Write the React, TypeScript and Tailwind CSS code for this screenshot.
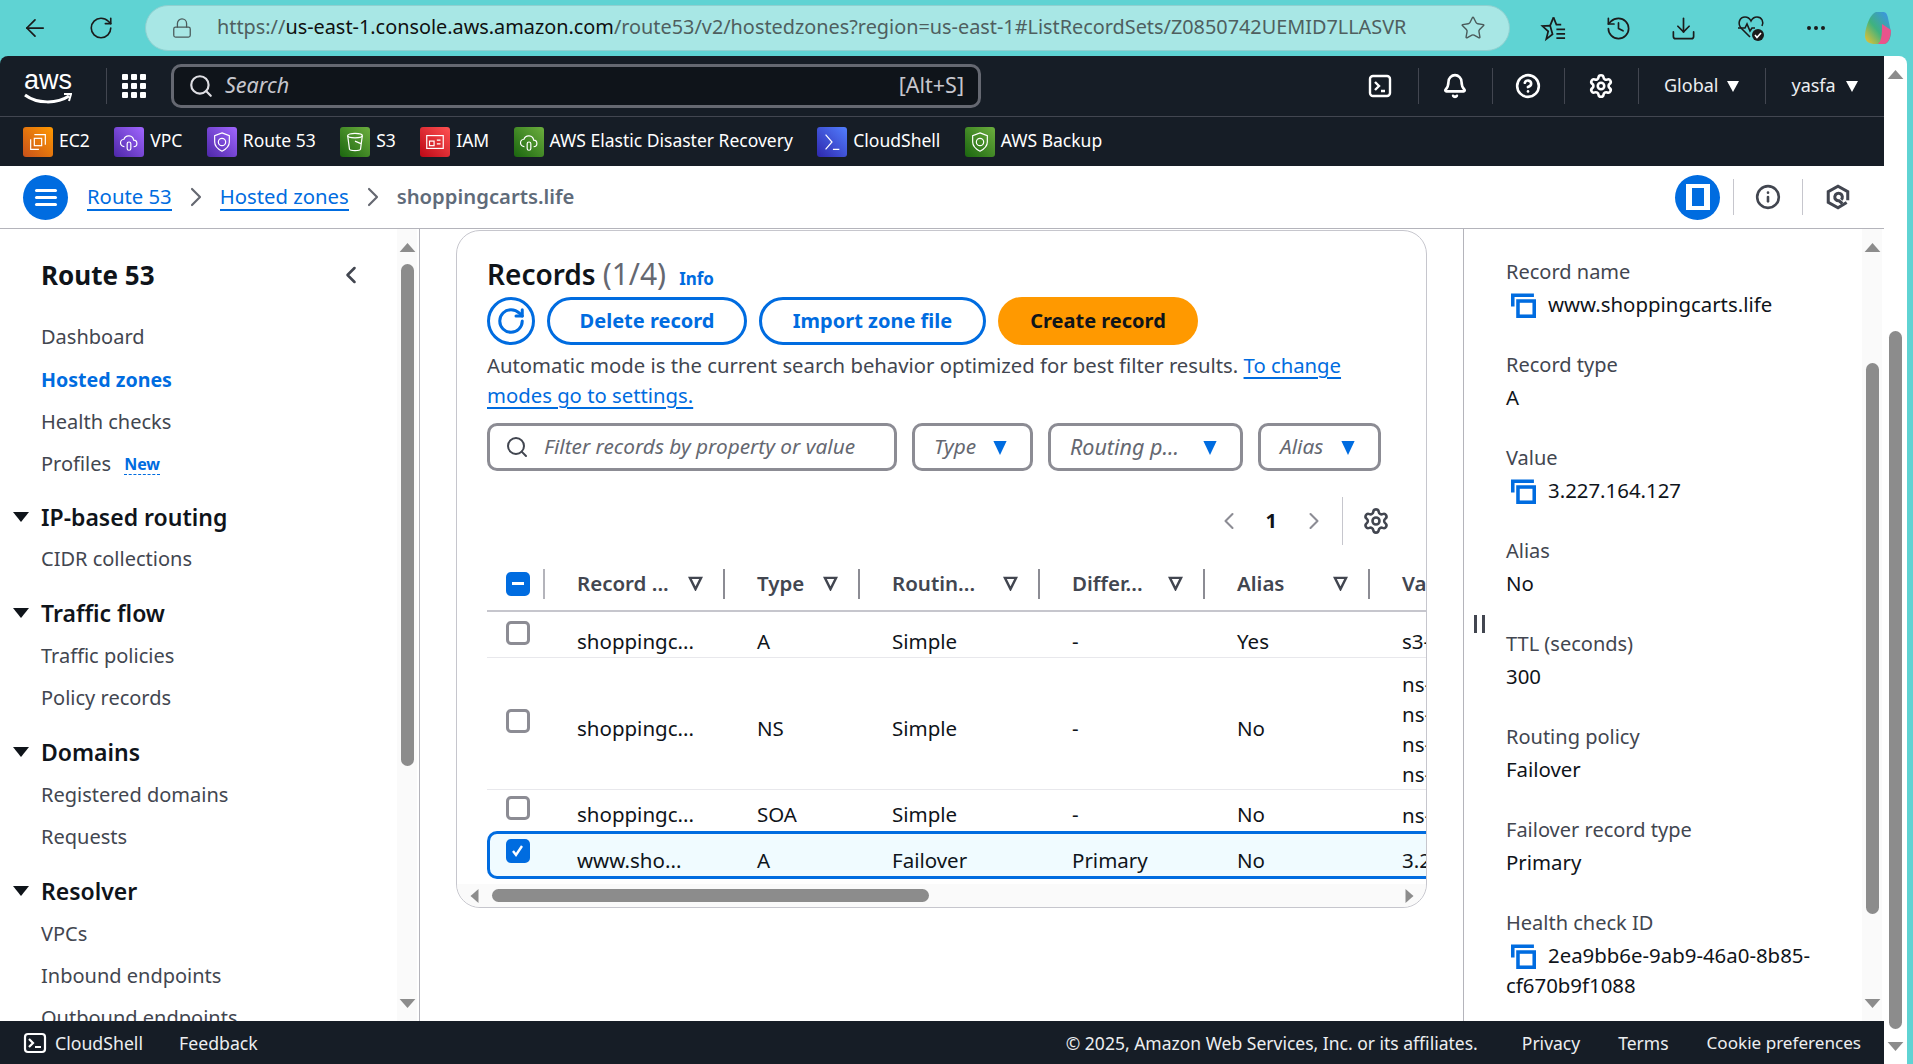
import {
  ArrowLeft,
  Bell,
  ChevronLeft,
  ChevronRight,
  CircleHelp,
  Download,
  Ellipsis,
  History,
  Info,
  Lock,
  RotateCw,
  Search,
  Settings,
  Star,
} from "lucide-react";

const services = [
  { name: "EC2", bg: "bg-[linear-gradient(45deg,#c8511b,#ff9900)]", glyph: "chip" },
  { name: "VPC", bg: "bg-[linear-gradient(45deg,#4d27a8,#a166ff)]", glyph: "cloud" },
  { name: "Route 53", bg: "bg-[linear-gradient(45deg,#4d27a8,#a166ff)]", glyph: "shield" },
  { name: "S3", bg: "bg-[linear-gradient(45deg,#1b660f,#6cae3e)]", glyph: "bucket" },
  { name: "IAM", bg: "bg-[linear-gradient(45deg,#bd0816,#ff5252)]", glyph: "id" },
  { name: "AWS Elastic Disaster Recovery", bg: "bg-[linear-gradient(45deg,#1b660f,#6cae3e)]", glyph: "cloud" },
  { name: "CloudShell", bg: "bg-[linear-gradient(45deg,#2e27ad,#527fff)]", glyph: "term" },
  { name: "AWS Backup", bg: "bg-[linear-gradient(45deg,#1b660f,#6cae3e)]", glyph: "shield" },
];

const sideNav = [
  { items: ["Dashboard", "Hosted zones", "Health checks", "Profiles"] },
  { title: "IP-based routing", items: ["CIDR collections"] },
  { title: "Traffic flow", items: ["Traffic policies", "Policy records"] },
  { title: "Domains", items: ["Registered domains", "Requests"] },
  { title: "Resolver", items: ["VPCs", "Inbound endpoints", "Outbound endpoints"] },
];

const details = [
  { label: "Record name", value: "www.shoppingcarts.life", copy: true },
  { label: "Record type", value: "A" },
  { label: "Value", value: "3.227.164.127", copy: true },
  { label: "Alias", value: "No" },
  { label: "TTL (seconds)", value: "300" },
  { label: "Routing policy", value: "Failover" },
  { label: "Failover record type", value: "Primary" },
  { label: "Health check ID", value: "2ea9bb6e-9ab9-46a0-8b85-cf670b9f1088", copy: true },
];

const rows = [
  { name: "shoppingc...", type: "A", routing: "Simple", diff: "-", alias: "Yes", value: ["s3-"], cls: "h-[45px]", boxCls: "mt-[-2px]", pad: "pt-[14px]" },
  { name: "shoppingc...", type: "NS", routing: "Simple", diff: "-", alias: "No", value: ["ns-", "ns-", "ns-", "ns-"], cls: "h-[131px]", boxCls: "mt-[-4px]", pad: "pt-[11px]" },
  { name: "shoppingc...", type: "SOA", routing: "Simple", diff: "-", alias: "No", value: ["ns-"], cls: "h-[41px]", boxCls: "mt-[-4px]", pad: "pt-[9px]" },
];

const ServiceGlyph = ({ kind }: { kind: string }) => (
  <svg viewBox="0 0 24 24" className="w-[22px] h-[22px]" fill="none" stroke="white" strokeWidth="1.3">
    {kind === "chip" && (
      <>
        <path d="M4 9v11h9M8 4h12v11" />
        <rect x="8" y="8" width="8" height="8" />
      </>
    )}
    {kind === "cloud" && (
      <>
        <path d="M7 17a4 4 0 0 1-.5-8 5.5 5.5 0 0 1 10.6 1 3.5 3.5 0 0 1 0 7" />
        <rect x="10" y="12" width="4" height="9" rx="2" />
      </>
    )}
    {kind === "shield" && (
      <>
        <path d="M12 2l8 3v7c0 5-4 8-8 10-4-2-8-5-8-10V5z" />
        <circle cx="12" cy="12" r="4" />
      </>
    )}
    {kind === "bucket" && (
      <>
        <ellipse cx="12" cy="5" rx="8" ry="2.5" />
        <path d="M4 5l2 15c1 2 11 2 12 0l2-15M12 11l7 3" />
      </>
    )}
    {kind === "id" && (
      <>
        <rect x="3" y="5" width="18" height="14" />
        <rect x="6" y="11" width="5" height="5" />
        <path d="M14 10h4M14 14h4" />
      </>
    )}
    {kind === "term" && <path d="M5 4l7 8-7 8M13 20h7" />}
  </svg>
);

const Caret = () => (
  <svg viewBox="0 0 14 18" className="w-[14px] h-[17px] shrink-0">
    <path d="M0 2h14L7 17z" fill="#006ce0" />
  </svg>
);

const SortIcon = () => (
  <svg viewBox="0 0 16 16" className="w-[15px] h-[15px] shrink-0" fill="none" stroke="#424650" strokeWidth="2.6">
    <path d="M2 2h12L8 14z" />
  </svg>
);

const CopyIcon = () => (
  <svg viewBox="0 0 24 24" className="w-[25px] h-[25px] shrink-0" fill="none" stroke="#006ce0" strokeWidth="3.4">
    <path d="M1.7 13V2.2H22" />
    <rect x="6.7" y="7.7" width="15.6" height="14.6" />
  </svg>
);

// scrollbar columns, the thumb position is set with top margin
const ScrollCol = ({ thumbTop, thumbH, cls }: { thumbTop: string; thumbH: string; cls: string }) => (
  <div className={`flex flex-col items-center justify-between bg-[#fafafa] ${cls}`}>
    <div className="flex flex-col items-center">
      <svg viewBox="0 0 14 8" className="w-[17px] h-[9px] mt-[14px]">
        <path d="M0 8L7 0l7 8z" fill="#8c8c8c" />
      </svg>
      <div className={`w-[13px] rounded-full bg-[#8c8c8c] ${thumbTop} ${thumbH}`} />
    </div>
    <svg viewBox="0 0 14 8" className="w-[17px] h-[9px] mb-[13px]">
      <path d="M0 0l7 8 7-8z" fill="#8c8c8c" />
    </svg>
  </div>
);

const BrowserBar = () => (
  <div className="h-[56px] flex items-center shrink-0 text-[#1b1b1b]">
    <ArrowLeft className="w-[28px] h-[28px] ml-[21px]" strokeWidth={1.5} />
    <RotateCw className="w-[26px] h-[26px] ml-[39px]" strokeWidth={1.5} />
    <div className="w-[1365px] h-[46px] ml-[31px] rounded-full bg-[#a8e7e5] border border-[#8fd0d0] flex items-center">
      <Lock className="w-[22px] h-[22px] ml-[25px] text-[#4b5b5b]" strokeWidth={1.4} />
      <div className="ml-[24px] mb-[2px] text-[19.85px] text-[#4f5f5f] whitespace-nowrap">
        https://<span className="text-[#101010]">us-east-1.console.aws.amazon.com</span>/route53/v2/hostedzones?region=us-east-1#ListRecordSets/Z0850742UEMID7LLASVR
      </div>
      <Star className="w-[26px] h-[26px] ml-auto mr-[23px] text-[#4b5b5b]" strokeWidth={1.3} />
    </div>
    <svg viewBox="0 0 28 28" className="w-[27px] h-[27px] ml-[30px]" fill="none" stroke="#1b1b1b" strokeWidth="1.8">
      <path d="M14 2.5l3 7.5h5M13 20l-6.5 5 2-8L2.500 11.500l8-.5z" />
      <path d="M14 2.500l-3.500 8.500" />
      <path d="M17 15h9M17 19.500h9M17 24h9" />
    </svg>
    <History className="w-[27px] h-[27px] ml-[38px]" strokeWidth={1.5} />
    <Download className="w-[27px] h-[27px] ml-[38px]" strokeWidth={1.5} />
    <svg viewBox="0 0 28 28" className="w-[28px] h-[28px] ml-[40px]" fill="none" stroke="#1b1b1b" strokeWidth="1.6">
      <path d="M13 23L4 14C0 9 3 3 8 3c3 0 5 2 6 4 1-2 3-4 6-4 5 0 7 5 5 9" />
      <path d="M1 14h7l2-4 3 7 2-3h3" />
      <circle cx="21" cy="21" r="6" fill="#1b1b1b" stroke="none" />
      <path d="M18 21l2 2.500 4-4.500" stroke="white" />
    </svg>
    <Ellipsis className="w-[24px] h-[24px] ml-[39px]" />
    <svg viewBox="0 0 28 36" className="w-[28px] h-[36px] ml-[36px]">
      <defs>
        <linearGradient id="cp" x1="0" y1="1" x2="1" y2="0">
          <stop offset="0" stopColor="#f6c32c" />
          <stop offset="0.45" stopColor="#3fb27f" />
          <stop offset="1" stopColor="#3a8ff5" />
        </linearGradient>
      </defs>
      <path d="M12 2h7c3 0 4 2 5 6l3 14c0 6-3 12-7 12h-9C6 34 1 32 1 26 1 18 6 4 12 2z" fill="url(#cp)" />
      <path d="M18 14l9 6c0 7-3 14-7 14h-6c4-3 4-12 4-20z" fill="#e9548c" />
    </svg>
  </div>
);

const TopNav = () => (
  <div className="h-[61px] bg-[#161d26] flex items-center shrink-0 border-b border-[#424650] text-white">
    <div className="w-[48px] ml-[24px] flex flex-col h-[38px]">
      <div className="text-[27px] leading-[26px] font-['Liberation_Sans',sans-serif] text-center">aws</div>
      <svg viewBox="0 0 48 12" className="w-[48px] h-[12px]">
        <path d="M1 2c12 9 32 9 44 1" fill="none" stroke="white" strokeWidth="3" />
        <path d="M40 1l7 0-2 7" fill="none" stroke="white" strokeWidth="2" />
      </svg>
    </div>
    <div className="h-[36px] w-px bg-[#424650] ml-[34px]" />
    <div className="grid grid-cols-3 gap-[3px] ml-[15px]">
      {Array.from({ length: 9 }).map((_, i) => (
        <div key={i} className="w-[6px] h-[6px] rounded-[1px] bg-white" />
      ))}
    </div>
    <div className="w-[810px] h-[44px] ml-[25px] rounded-[10px] border-[3px] border-[#656871] bg-[#0f141a] flex items-center px-[14px] text-[#c6c6cd]">
      <Search className="w-[26px] h-[26px] text-[#dedee3]" strokeWidth={2} />
      <span className="ml-[11px] mb-[2px] italic text-[21.500px]">Search</span>
      <span className="ml-auto mb-[2px] text-[21.500px]">[Alt+S]</span>
    </div>
    <svg viewBox="0 0 24 24" className="w-[24px] h-[24px] ml-[387px]" fill="none" stroke="white" strokeWidth="2.4">
      <rect x="2" y="2" width="20" height="20" rx="3" />
      <path d="M7 8l4 4-4 4M13 17h4" />
    </svg>
    <div className="h-[36px] w-px bg-[#424650] ml-[26px]" />
    <Bell className="w-[26px] h-[26px] ml-[23px]" strokeWidth={2.4} />
    <div className="h-[36px] w-px bg-[#424650] ml-[24px]" />
    <CircleHelp className="w-[26px] h-[26px] ml-[22px]" strokeWidth={2.4} />
    <div className="h-[36px] w-px bg-[#424650] ml-[23px]" />
    <Settings className="w-[26px] h-[26px] ml-[23px]" strokeWidth={2.4} />
    <div className="h-[36px] w-px bg-[#424650] ml-[24px]" />
    <span className="ml-[25px] mb-[2px] text-[18px] text-[#eceef0]">Global</span>
    <div className="ml-[9px] w-0 h-0 border-x-[6px] border-x-transparent border-t-[11px] border-t-white" />
    <div className="h-[36px] w-px bg-[#424650] ml-[26px]" />
    <span className="ml-[25px] mb-[2px] text-[18px] text-[#eceef0]">yasfa</span>
    <div className="ml-[10px] w-0 h-0 border-x-[6px] border-x-transparent border-t-[11px] border-t-white" />
  </div>
);

const ServicesBar = () => (
  <div className="h-[49px] bg-[#161d26] flex items-center shrink-0 pl-[23px] gap-[24.400px] text-white text-[17.500px] whitespace-nowrap">
    {services.map((s) => (
      <div key={s.name} className="flex items-center gap-[6px]">
        <div className={`w-[30px] h-[30px] rounded-[3px] flex items-center justify-center ${s.bg}`}>
          <ServiceGlyph kind={s.glyph} />
        </div>
        <span className="mb-[2px]">{s.name}</span>
      </div>
    ))}
  </div>
);

const Breadcrumb = () => (
  <div className="h-[63px] flex items-center shrink-0 bg-white border-b border-[#b4b4bb] text-[20.300px]">
    <div className="w-[45px] h-[45px] ml-[23px] rounded-full bg-[#006ce0] flex flex-col items-center justify-center gap-[4px]">
      <div className="w-[22px] h-[3px] bg-white rounded" />
      <div className="w-[22px] h-[3px] bg-white rounded" />
      <div className="w-[22px] h-[3px] bg-white rounded" />
    </div>
    <a className="ml-[19px] mb-[1px] text-[#006ce0] border-b-2 border-[#006ce0] leading-[26px]">Route 53</a>
    <ChevronRight className="w-[32px] h-[32px] mx-[8px] text-[#656871]" strokeWidth={1.6} />
    <a className="mb-[1px] text-[#006ce0] border-b-2 border-[#006ce0] leading-[26px]">Hosted zones</a>
    <ChevronRight className="w-[32px] h-[32px] mx-[8px] text-[#656871]" strokeWidth={1.6} />
    <span className="mb-[2px] font-semibold text-[#5f6b7a]">shoppingcarts.life</span>
    <div className="w-[45px] h-[45px] ml-auto rounded-full bg-[#006ce0] flex items-center justify-center">
      <div className="w-[24px] h-[26px] border-[4px] border-white border-x-[6px] bg-[#006ce0]" />
    </div>
    <div className="h-[36px] w-px bg-[#c6c6cd] ml-[13px]" />
    <Info className="w-[26px] h-[26px] ml-[21px] text-[#424650]" strokeWidth={2.4} />
    <div className="h-[36px] w-px bg-[#c6c6cd] ml-[21px]" />
    <svg viewBox="0 0 24 24" className="w-[26px] h-[26px] ml-[22px] mr-[33px]" fill="none" stroke="#424650" strokeWidth="2.8">
      <path d="M20 17l-8 5-9-5V7l9-5 9 5v8" />
      <path d="M15 14.500a3.500 3.500 0 1 0-2 1l3 2.500" />
    </svg>
  </div>
);

const Sidebar = () => (
  <div className="w-[420px] shrink-0 flex border-r border-[#b4b4bb] bg-white">
    <div className="w-[397px] overflow-hidden">
      <div className="flex items-center justify-between h-[36px] mt-[28px] pl-[41px] pr-[32px]">
        <span className="text-[26px] font-bold text-[#0f141a]">Route 53</span>
        <ChevronLeft className="w-[28px] h-[28px] text-[#424650]" strokeWidth={2.2} />
      </div>
      <div className="mt-[-1px]">
        {sideNav.map((g, idx) => (
          <div key={idx} className={idx === 0 ? "mt-[24px]" : idx === 1 ? "mt-[10px]" : "mt-[11.500px]"}>
            {g.title && (
              <div className="flex items-center h-[42.600px] pl-[13px]">
                <div className="w-0 h-0 border-x-[8px] border-x-transparent border-t-[10px] border-t-[#0f141a]" />
                <span className="ml-[12px] text-[23px] font-semibold text-[#0f141a]">{g.title}</span>
              </div>
            )}
            {g.items.map((item) => (
              <div key={item} className="h-[42.400px] flex items-center pl-[41px] text-[20px] text-[#424650]">
                <span className={item === "Hosted zones" ? "font-bold text-[19.600px] text-[#006ce0]" : ""}>{item}</span>
                {item === "Profiles" && (
                  <span className="ml-[13px] text-[16px] font-bold leading-[20px] text-[#006ce0] border-b border-dashed border-[#006ce0]">New</span>
                )}
              </div>
            ))}
          </div>
        ))}
      </div>
    </div>
    <ScrollCol cls="w-[20px]" thumbTop="mt-[12px]" thumbH="h-[502px]" />
  </div>
);

const ScrollTrack = () => (
  <div className="h-[23px] bg-[#fafafa] flex items-center pl-[13px] pr-[12px] rounded-b-[24px]">
    <svg viewBox="0 0 8 14" className="w-[9px] h-[14px] shrink-0">
      <path d="M8 0L0 7l8 7z" fill="#8c8c8c" />
    </svg>
    <div className="w-[437px] h-[13px] ml-[13px] rounded-full bg-[#8c8c8c]" />
    <svg viewBox="0 0 8 14" className="w-[9px] h-[14px] ml-auto shrink-0">
      <path d="M0 0l8 7-8 7z" fill="#8c8c8c" />
    </svg>
  </div>
);

const colW = ["w-[58px]", "w-[180px]", "w-[135px]", "w-[180px]", "w-[165px]", "w-[165px]", "w-[57px]"];

const RecordsTable = () => (
  <div className="overflow-hidden">
    <table className="table-fixed w-[940px] text-[20.500px] text-[#0f141a] border-separate border-spacing-0">
      <colgroup>
        {colW.map((c, i) => (
          <col key={i} className={c} />
        ))}
      </colgroup>
      <thead>
        <tr className="h-[55px] text-[#424650]">
          <th className="pl-[19px] text-left border-b-2 border-[#c6c6cd]">
            <div className="flex items-center justify-between">
              <div className="w-[24px] h-[24px] rounded-[5px] bg-[#006ce0] flex items-center justify-center">
                <div className="w-[12px] h-[3px] bg-white" />
              </div>
              <div className="w-[2px] h-[30px] bg-[#b4b4bb]" />
            </div>
          </th>
          {["Record ...", "Type", "Routin...", "Differ...", "Alias"].map((h) => (
            <th key={h} className="font-semibold text-left border-b-2 border-[#c6c6cd]">
              <div className="flex items-center pl-[32px] whitespace-nowrap">
                <span>{h}</span>
                <span className="ml-auto mr-[20px]">
                  <SortIcon />
                </span>
                <div className="w-[2px] h-[30px] bg-[#8c8c94]" />
              </div>
            </th>
          ))}
          <th className="font-semibold text-left pl-[32px] whitespace-nowrap overflow-hidden border-b-2 border-[#c6c6cd]">Value</th>
        </tr>
      </thead>
      <tbody>
        {rows.map((r, i) => {
          const line = i < 2 ? "border-b border-[#e8e8ec]" : "";
          return (
            <tr key={i} className={r.cls}>
              <td className={`pl-[19px] align-middle ${line}`}>
                <div className={`w-[24px] h-[24px] rounded-[5px] border-[3px] border-[#8c8c94] ${r.boxCls}`} />
              </td>
              <td className={`pl-[32px] whitespace-nowrap ${r.pad} ${line}`}>{r.name}</td>
              <td className={`pl-[32px] ${r.pad} ${line}`}>{r.type}</td>
              <td className={`pl-[32px] ${r.pad} ${line}`}>{r.routing}</td>
              <td className={`pl-[32px] ${r.pad} ${line}`}>{r.diff}</td>
              <td className={`pl-[32px] ${r.pad} ${line}`}>{r.alias}</td>
              <td className={`pl-[32px] whitespace-nowrap leading-[30px] ${r.pad} ${line}`}>
                {r.value.map((v, j) => (
                  <div key={j}>{v}</div>
                ))}
              </td>
            </tr>
          );
        })}
        <tr className="h-[46px]">
          <td className="pl-[16px] bg-[#f0fbff] border-y-[3px] border-l-[3px] border-[#006ce0] rounded-l-[10px]">
            <div className="w-[24px] h-[24px] rounded-[5px] bg-[#006ce0] mt-[-7px] flex items-center justify-center">
              <svg viewBox="0 0 16 16" className="w-[16px] h-[16px]" fill="none" stroke="white" strokeWidth="2.4">
                <path d="M3 8l3 4 6-9" />
              </svg>
            </div>
          </td>
          <td className="pl-[32px] whitespace-nowrap pt-[11px] bg-[#f0fbff] border-y-[3px] border-[#006ce0]">www.sho...</td>
          <td className="pl-[32px] pt-[11px] bg-[#f0fbff] border-y-[3px] border-[#006ce0]">A</td>
          <td className="pl-[32px] pt-[11px] bg-[#f0fbff] border-y-[3px] border-[#006ce0]">Failover</td>
          <td className="pl-[32px] pt-[11px] bg-[#f0fbff] border-y-[3px] border-[#006ce0]">Primary</td>
          <td className="pl-[32px] pt-[11px] bg-[#f0fbff] border-y-[3px] border-[#006ce0]">No</td>
          <td className="pl-[32px] pt-[11px] whitespace-nowrap overflow-hidden bg-[#f0fbff] border-y-[3px] border-[#006ce0]">3.227.164.127</td>
        </tr>
      </tbody>
    </table>
  </div>
);

const RecordsCard = () => (
  <div className="w-[971px] h-[678px] ml-[36px] mt-[1px] border border-[#c6c6cd] rounded-[24px] flex flex-col justify-between bg-white overflow-hidden">
    <div className="pl-[30px] pt-[20px]">
      <div className="flex items-baseline h-[40px]">
        <span className="text-[28px] font-semibold text-[#0f141a]">Records</span>
        <span className="text-[30px] text-[#656871] ml-[7px]">(1/4)</span>
        <span className="text-[17px] font-bold text-[#006ce0] ml-[13px] mb-[1px]">Info</span>
      </div>
      <div className="flex gap-[12px] mt-[6px]">
        <div className="w-[48px] h-[48px] rounded-full border-[3px] border-[#006ce0] flex items-center justify-center">
          <RotateCw className="w-[30px] h-[30px] text-[#006ce0]" strokeWidth={2.4} />
        </div>
        <div className="w-[200px] h-[48px] rounded-full border-[3px] border-[#006ce0] flex items-center justify-center font-bold text-[20px] text-[#006ce0]">Delete record</div>
        <div className="w-[227px] h-[48px] rounded-full border-[3px] border-[#006ce0] flex items-center justify-center font-bold text-[20px] text-[#006ce0]">Import zone file</div>
        <div className="w-[200px] h-[48px] rounded-full bg-[#ff9900] flex items-center justify-center font-bold text-[20px] text-[#0f141a]">Create record</div>
      </div>
      <p className="mt-[5px] w-[880px] text-[20.300px] leading-[30px] text-[#424650]">
        Automatic mode is the current search behavior optimized for best filter results.{" "}
        <a className="text-[#006ce0] underline underline-offset-4">To change modes go to settings.</a>
      </p>
      <div className="flex mt-[13px] h-[48px] text-[#656871] italic text-[20.800px]">
        <div className="w-[410px] rounded-[10px] border-[3px] border-[#8c8c94] flex items-center pl-[15px]">
          <Search className="w-[24px] h-[24px] text-[#424650]" strokeWidth={2} />
          <span className="ml-[15px]">Filter records by property or value</span>
        </div>
        <div className="w-[121px] ml-[15px] rounded-[10px] border-[3px] border-[#8c8c94] flex items-center justify-between pl-[19px] pr-[23px]">
          Type
          <Caret />
        </div>
        <div className="w-[195px] ml-[15px] rounded-[10px] border-[3px] border-[#8c8c94] flex items-center justify-between pl-[19px] pr-[23px] text-[21.500px]">
          Routing p...
          <Caret />
        </div>
        <div className="w-[123px] ml-[15px] rounded-[10px] border-[3px] border-[#8c8c94] flex items-center justify-between pl-[19px] pr-[23px]">
          Alias
          <Caret />
        </div>
      </div>
      <div className="flex items-center h-[48px] mt-[26px] w-[903px] justify-end">
        <ChevronLeft className="w-[28px] h-[28px] text-[#8c8c94]" strokeWidth={1.8} />
        <span className="ml-[23px] font-bold text-[20px] text-[#0f141a]">1</span>
        <ChevronRight className="w-[28px] h-[28px] ml-[23px] text-[#8c8c94]" strokeWidth={1.8} />
        <div className="w-px h-[48px] bg-[#c6c6cd] ml-[14px]" />
        <Settings className="w-[28px] h-[28px] ml-[19px] text-[#424650]" strokeWidth={2.2} />
      </div>
      <div className="mt-[12px]">
        <RecordsTable />
      </div>
    </div>
    <ScrollTrack />
  </div>
);

const DetailPanel = () => (
  <div className="flex-1 flex border-l border-[#b4b4bb] bg-white">
    <div className="w-[21px] flex items-center justify-center pl-[10px]">
      <div className="w-[12px] h-[18px] border-x-[3px] border-[#424650] mb-[2px]" />
    </div>
    <div className="flex-1 pt-[28px] pl-[21px] pr-[20px] text-[20.400px] leading-[30px] text-[#0f141a]">
      {details.map((d) => (
        <div key={d.label} className="h-[93px]">
          <div className="text-[20px] text-[#424650] leading-[30px]">{d.label}</div>
          <div className="mt-[2px]">
            {d.copy && (
              <span className="inline-block align-[-6px] ml-[5px] mr-[12px]">
                <CopyIcon />
              </span>
            )}
            {d.value}
          </div>
        </div>
      ))}
    </div>
    <ScrollCol cls="w-[20px] mr-[2px]" thumbTop="mt-[111px]" thumbH="h-[551px]" />
  </div>
);

const Footer = () => (
  <div className="h-[43px] pt-[1px] bg-[#161d26] flex items-center shrink-0 text-[#eceef0] text-[17.500px] whitespace-nowrap">
    <svg viewBox="0 0 24 24" className="w-[24px] h-[24px] ml-[23px]" fill="none" stroke="white" strokeWidth="2.2">
      <rect x="2" y="3" width="20" height="18" rx="3" />
      <path d="M6 8l4 4-4 4M12 16h6" />
    </svg>
    <span className="ml-[8px] text-[17.700px]">CloudShell</span>
    <span className="ml-[36px] text-[17.700px]">Feedback</span>
    <span className="ml-auto">© 2025, Amazon Web Services, Inc. or its affiliates.</span>
    <span className="ml-[44px]">Privacy</span>
    <span className="ml-[38px]">Terms</span>
    <span className="ml-[38px] mr-[23px] text-[17.100px]">Cookie preferences</span>
  </div>
);

export default function App() {
  return (
    <div className="w-[1913px] h-[1064px] overflow-hidden flex flex-col bg-[#5fd3d3] font-['Noto_Sans',sans-serif]">
      <BrowserBar />
      <div className="flex-1 flex min-h-0">
        <div className="w-[1884px] flex flex-col rounded-tl-[8px] overflow-hidden">
          <TopNav />
          <ServicesBar />
          <Breadcrumb />
          <div className="flex-1 flex min-h-0 overflow-hidden bg-white">
            <Sidebar />
            <div className="w-[1043px] shrink-0">
              <RecordsCard />
            </div>
            <DetailPanel />
          </div>
          <Footer />
        </div>
        <ScrollCol cls="w-[23px] !bg-white rounded-tr-[8px]" thumbTop="mt-[252px]" thumbH="h-[698px]" />
      </div>
    </div>
  );
}
